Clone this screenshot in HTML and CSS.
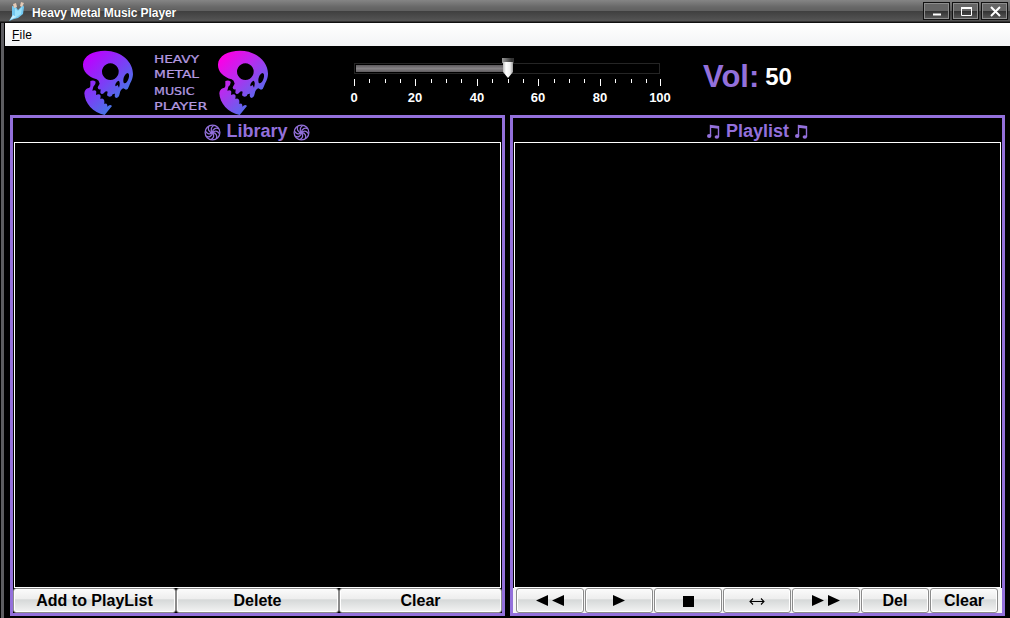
FILE: index.html
```html
<!DOCTYPE html>
<html lang="en">
<head>
<meta charset="utf-8">
<title>Heavy Metal Music Player</title>
<link rel="stylesheet" href="styles.css">
</head>
<body>
<div class="window">
  <header class="titlebar">
    <svg class="app-icon" width="18" height="20" viewBox="0 0 18 20"><path d="M4 5l4 1 2 3 5-5 1 2-1 7-5 4-4 1-5 2 3-5z" fill="#73c8f0"/><path d="M5 3l3-1 1 4-3 1zM13 1l3 1-2 4-2-1z" fill="#e5c9b4"/><path d="M7 7l3 3 4-4-1 7-6 4z" fill="#9be2fb"/><path d="M2 19l3-5 3 2z" fill="#c8f1ff"/></svg>
    <span class="title">Heavy Metal Music Player</span>
    <div class="controls">
      <span class="control"><svg width="26" height="16"><path d="M9 11.5h8" stroke="#fff" stroke-width="2"/></svg></span>
      <span class="control"><svg width="26" height="16"><path d="M8.5 5v7.5h10V5" fill="none" stroke="#fff"/><path d="M8 5h11" stroke="#fff" stroke-width="2"/></svg></span>
      <span class="control"><svg width="26" height="16"><path d="M9 4l9 9M18 4l-9 9" stroke="#fff" stroke-width="2"/></svg></span>
    </div>
  </header>
  <nav class="menubar"><span class="menu"><u>F</u>ile</span></nav>
  <section class="top">
    <svg class="logo" width="210" height="69" viewBox="0 6 630 207">
      <defs>
        <linearGradient id="violet" x1="0.1" y1="0.1" x2="0.75" y2="0.9"><stop offset="0" stop-color="#bd00ff"/><stop offset=".55" stop-color="#7545f5"/><stop offset="1" stop-color="#3887e0"/></linearGradient>
        <linearGradient id="pink" x1="0.1" y1="0.1" x2="0.75" y2="0.9"><stop offset="0" stop-color="#fa00e6"/><stop offset=".4" stop-color="#b92bef"/><stop offset="1" stop-color="#4278ed"/></linearGradient>
        <path id="skull" fill-rule="evenodd" d="M80 106C54 99 38 82 39 61C40 35 70 20 105 20C155 20 190 55 189 91C188 108 181 116 177 127Q175 136 168 137L160 133Q151 137 149 149Q147 160 139 162Q132 160 135 149Q127 148 125 156Q117 161 111 154L113 143Q106 140 102 147Q95 153 91 146L92 136Q84 139 83 130L89 119Q87 109 80 106ZM121 58a25 25 0 1 0 .1 0ZM172 87C162 91 158 108 161 116C169 124 181 99 176 89ZM146 110C138 113 134 123 137 127L143 123 147 131Q152 115 146 110ZM61 111Q70 107 77 113Q78 121 70 128L67 140Q76 136 79 143L78 153Q88 148 92 155L91 165Q100 161 103 170L103 180Q111 176 112 184L112 188Q120 179 126 186L104 213C69 207 44 177 43 148Q44 137 53 133Q62 132 61 123Z"/>
      </defs>
      <use href="#skull" fill="url(#violet)"/>
      <use href="#skull" x="405" fill="url(#pink)"/>
      <g class="logo-text">
        <text x="252" y="57" textLength="135" lengthAdjust="spacingAndGlyphs">HEAVY</text>
        <text x="252" y="102" textLength="135" lengthAdjust="spacingAndGlyphs">METAL</text>
        <text x="252" y="153" textLength="122" lengthAdjust="spacingAndGlyphs">MUSIC</text>
        <text x="252" y="198" textLength="160" lengthAdjust="spacingAndGlyphs">PLAYER</text>
      </g>
    </svg>
    <svg class="slider" width="340" height="60" viewBox="340 50 340 60">
      <defs>
        <linearGradient id="fill" x2="0" y2="1"><stop stop-color="#5c595c"/><stop offset=".5" stop-color="#858285"/><stop offset="1" stop-color="#5f5c5f"/></linearGradient>
        <linearGradient id="knob"><stop stop-color="#bbb"/><stop offset=".3" stop-color="#fff"/><stop offset=".7" stop-color="#eee"/><stop offset="1" stop-color="#999"/></linearGradient>
        <linearGradient id="cap"><stop stop-color="#999"/><stop offset=".8" stop-color="#333"/></linearGradient>
      </defs>
      <rect x="354.5" y="63.5" width="305" height="10" fill="#000" stroke="#252525"/>
      <rect x="356" y="65" width="150" height="7" fill="url(#fill)"/>
      <path d="M502 58h12v5h-12z" fill="url(#cap)"/><path d="M503 62h10v10l-5 6-5-6z" fill="url(#knob)"/>
      <path stroke="#fff" d="M354.5 79v7M415.5 79v7M477.5 79v7M538.5 79v7M600.5 79v7M660.5 79v7M369.5 79v4M385.5 79v4M400.5 79v4M431.5 79v4M446.5 79v4M461.5 79v4M492.5 79v4M508.5 79v4M523.5 79v4M554.5 79v4M569.5 79v4M584.5 79v4M615.5 79v4M631.5 79v4M646.5 79v4"/>
      <g class="scale"><text x="354" y="102">0</text><text x="415" y="102">20</text><text x="477" y="102">40</text><text x="538" y="102">60</text><text x="600" y="102">80</text><text x="660" y="102">100</text></g>
    </svg>
    <div class="volume"><span class="vol-label">Vol:</span><span class="vol-value">50</span></div>
  </section>
  <main class="panes">
    <section class="pane">
      <h2 class="pane-title library-title"><svg class="swirl" width="17" height="17" viewBox="-8.5 -8.5 17 17"><use href="#spiral"/></svg><span>Library</span><svg class="swirl" width="17" height="17" viewBox="-8.5 -8.5 17 17"><defs><path id="arm" d="M0 0C0-4 4-5 6.3-3.7"/><g id="spiral"><circle r="7.4"/><use href="#arm"/><use href="#arm" transform="rotate(45)"/><use href="#arm" transform="rotate(90)"/><use href="#arm" transform="rotate(135)"/><use href="#arm" transform="rotate(180)"/><use href="#arm" transform="rotate(225)"/><use href="#arm" transform="rotate(270)"/><use href="#arm" transform="rotate(315)"/></g></defs><use href="#spiral"/></svg></h2>
      <div class="list"></div>
      <div class="buttons library-buttons"><button>Add to PlayList</button><button>Delete</button><button>Clear</button></div>
    </section>
    <section class="pane">
      <h2 class="pane-title"><svg class="note" width="13" height="15"><use href="#beamed"/></svg><span>Playlist</span><svg class="note" width="13" height="15"><defs><g id="beamed"><path d="M3.5 12V1.5l8 1V13M3.5 3l8 1" fill="none" stroke="#9370db" stroke-width="1.4"/><ellipse cx="2.2" cy="12" rx="2.2" ry="1.9"/><ellipse cx="9.8" cy="13" rx="2.2" ry="1.8"/></g></defs><use href="#beamed"/></svg></h2>
      <div class="list"></div>
      <div class="buttons playlist-buttons">
        <button><svg width="28" height="12"><path d="M12 0v11L0 5.5zM28 0v11L16 5.5z"/></svg></button>
        <button><svg width="12" height="12"><path d="M0 0v11l12-5.5z"/></svg></button>
        <button><svg width="11" height="11"><path d="M0 0h11v11H0z"/></svg></button>
        <button><svg width="16" height="9"><path d="M1 4.5h14M4 1.5l-3 3 3 3M12 1.5l3 3-3 3" fill="none" stroke="#000" stroke-width="1.1"/></svg></button>
        <button><svg width="28" height="12"><path d="M0 0v11l12-5.5zM16 0v11l12-5.5z"/></svg></button>
        <button>Del</button>
        <button>Clear</button>
      </div>
    </section>
  </main>
</div>
</body>
</html>
```
FILE: styles.css
```css
* { box-sizing: border-box; }
body { margin: 0; background: #000; font-family: "Liberation Sans", Arial, sans-serif; overflow: hidden; }
.window { width: 1010px; height: 618px; display: flex; flex-direction: column; padding-left: 5px; background: linear-gradient(90deg, #000 0 1px, #5d5d61 1px 4px, #000 4px); }
.titlebar { flex: none; height: 23px; margin-left: -5px; padding: 0 2px 0 8px; display: flex; align-items: flex-start; background: linear-gradient(#858585 0, #686868 7px, #606060 11px, #3f3f3f 11px, #555 21px, #111 22px); }
.app-icon { margin-top: 1px; }
.title { margin: 5px 0 0 6px; font-size: 12px; line-height: 16px; font-weight: bold; letter-spacing: -.08px; color: #fff; white-space: nowrap; text-shadow: 0 0 1px #222; }
.controls { margin: 2px 0 0 auto; display: flex; gap: 2px; }
.control { width: 27px; height: 18px; border: 1px solid #111; box-shadow: inset 0 0 0 1px #8d8d8d; background: linear-gradient(#656565 0 48%, #333 52%, #5b5b5b); }
.control svg { display: block; }
.menubar { flex: none; height: 23px; padding: 4px 7px; background: linear-gradient(#fff, #f3f4f5); color: #000; font-size: 12px; line-height: 16px; }
.menu { display: block; letter-spacing: .2px; }
.top { flex: none; height: 69px; display: flex; align-items: flex-start; padding-left: 65px; }
.logo { flex: none; }
.logo-text { font: 31px "DejaVu Sans", sans-serif; fill: #b49ae0; stroke: #b49ae0; stroke-width: .7; }
.slider { margin: 4px 0 0 60px; flex: none; }
.scale text { font: bold 13px "Liberation Sans", Arial, sans-serif; fill: #fff; text-anchor: middle; }
.volume { margin: 12px 0 0 23px; display: flex; align-items: flex-start; font-weight: bold; line-height: 38px; }
.vol-label { color: #9370db; font-size: 31px; }
.vol-value { color: #fff; font-size: 24px; margin-left: 6px; }
.panes { flex: none; height: 501px; display: grid; grid-template-columns: 495px 495px; gap: 5px; padding-left: 5px; }
.pane { border: 3px solid #9370db; display: flex; flex-direction: column; }
.pane-title { margin: 0; height: 24px; display: flex; justify-content: center; align-items: center; gap: 6px; padding-top: 2px; color: #9370db; font-size: 18px; line-height: 22px; }
.library-title { gap: 5px; padding-right: 1px; }
.swirl { fill: none; stroke: #9370db; stroke-width: 1.3; margin-top: 2px; }
.note { fill: #9370db; margin-top: 1px; }
.list { flex: 1; border: 1px solid #fff; margin: 0 1px; }
.buttons { height: 25px; display: grid; }
.library-buttons { grid-template-columns: 163px 163px 163px; }
.playlist-buttons { grid-template-columns: repeat(7, 69px); padding: 0 3px; background: #f5f5f5; }
button { margin: 0; padding: 1px 0 0; display: flex; align-items: center; justify-content: center; border: 1px solid #8b8b8b; border-radius: 3px; box-shadow: inset 0 0 0 1px #fff; background: linear-gradient(#fbfbfb 0, #ededed 45%, #d5d8d8 46%, #f3f3f3); color: #000; font: bold 16px "Liberation Sans", Arial, sans-serif; }
.playlist-buttons button { margin: 0 1px 0 0; }
```
